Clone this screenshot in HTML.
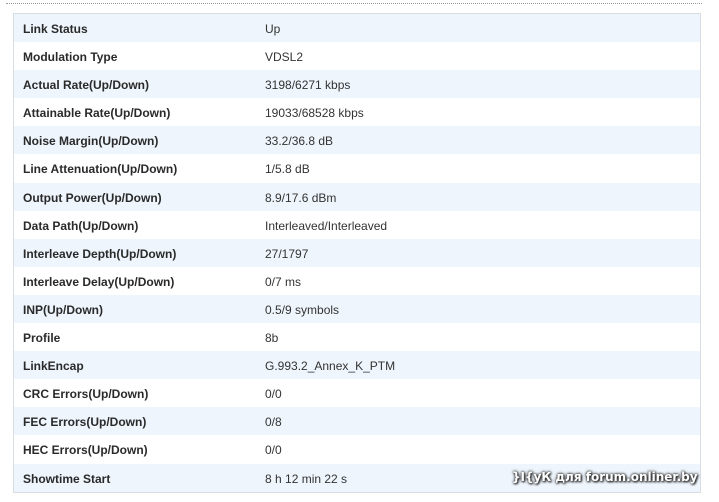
<!DOCTYPE html>
<html><head><style>
body{margin:0;width:719px;height:502px;background:#fff;position:relative;overflow:hidden;font-family:"Liberation Sans",sans-serif;}
.dot{position:absolute;left:6px;top:3px;width:696px;border-top:1px dotted #999;}
.t{position:absolute;left:13px;top:13px;width:686px;border:1px solid #d8dde3;}
.r{height:28.1px;line-height:30px;font-size:12px;color:#333;position:relative;}
.r:nth-child(odd){background:#eef5fc;}
.a{position:absolute;left:9px;font-weight:bold;color:#2a2a2a;}
.b{position:absolute;left:251px;}
.wm{position:absolute;left:512px;top:470px;font:bold 12px "DejaVu Sans",sans-serif;color:#fff;text-shadow:0 0 2px #333,0 0 3px #333,1px 1px 2px #000;}
</style></head><body>
<div class="dot"></div>
<div class="t">
<div class="r"><span class="a">Link Status</span><span class="b">Up</span></div>
<div class="r"><span class="a">Modulation Type</span><span class="b">VDSL2</span></div>
<div class="r"><span class="a">Actual Rate(Up/Down)</span><span class="b">3198/6271 kbps</span></div>
<div class="r"><span class="a">Attainable Rate(Up/Down)</span><span class="b">19033/68528 kbps</span></div>
<div class="r"><span class="a">Noise Margin(Up/Down)</span><span class="b">33.2/36.8 dB</span></div>
<div class="r"><span class="a">Line Attenuation(Up/Down)</span><span class="b">1/5.8 dB</span></div>
<div class="r"><span class="a">Output Power(Up/Down)</span><span class="b">8.9/17.6 dBm</span></div>
<div class="r"><span class="a">Data Path(Up/Down)</span><span class="b">Interleaved/Interleaved</span></div>
<div class="r"><span class="a">Interleave Depth(Up/Down)</span><span class="b">27/1797</span></div>
<div class="r"><span class="a">Interleave Delay(Up/Down)</span><span class="b">0/7 ms</span></div>
<div class="r"><span class="a">INP(Up/Down)</span><span class="b">0.5/9 symbols</span></div>
<div class="r"><span class="a">Profile</span><span class="b">8b</span></div>
<div class="r"><span class="a">LinkEncap</span><span class="b">G.993.2_Annex_K_PTM</span></div>
<div class="r"><span class="a">CRC Errors(Up/Down)</span><span class="b">0/0</span></div>
<div class="r"><span class="a">FEC Errors(Up/Down)</span><span class="b">0/8</span></div>
<div class="r"><span class="a">HEC Errors(Up/Down)</span><span class="b">0/0</span></div>
<div class="r"><span class="a">Showtime Start</span><span class="b">8 h 12 min 22 s</span></div>
</div>
<div class="wm">}I{уК для forum.onliner.by</div>
</body></html>
